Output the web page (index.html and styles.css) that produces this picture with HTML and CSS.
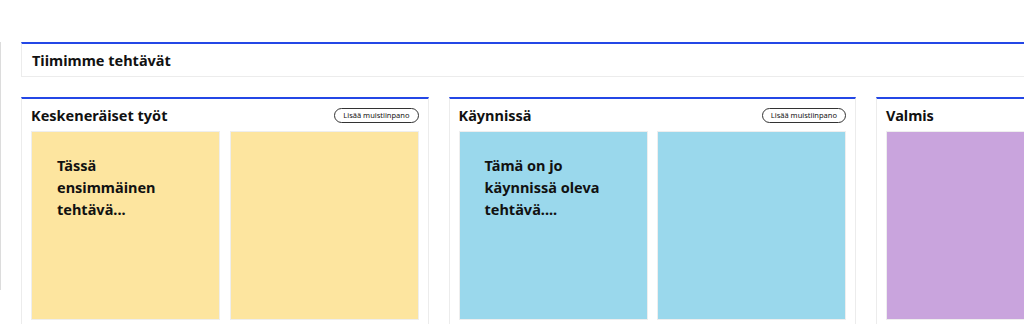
FILE: index.html
```html
<html>
<head>
	<meta charset="utf-8" />
	<link rel="stylesheet" href="styles.css">
</head>

<body>
	<div class="page">
		<div class="side-edge"></div>
		<div class="main">
			<div class="board-header">
				<h1>Tiimimme tehtävät</h1>
			</div>
			<div class="columns">
				<div class="column">
					<div class="column-head">
						<h2>Keskeneräiset työt</h2>
						<span class="add-note">Lisää muistiinpano</span>
					</div>
					<div class="notes">
						<div class="note yellow">Tässä ensimmäinen tehtävä...</div>
						<div class="note yellow"></div>
					</div>
				</div>
				<div class="column">
					<div class="column-head">
						<h2>Käynnissä</h2>
						<span class="add-note">Lisää muistiinpano</span>
					</div>
					<div class="notes">
						<div class="note blue">Tämä on jo käynnissä oleva tehtävä....</div>
						<div class="note blue"></div>
					</div>
				</div>
				<div class="column">
					<div class="column-head">
						<h2>Valmis</h2>
					</div>
					<div class="notes">
						<div class="note purple"></div>
					</div>
				</div>
			</div>
		</div>
	</div>
</body>
</html>
```

FILE: styles.css
```css
* {
	box-sizing: border-box;
}
body {
	margin: 0;
	padding: 0;
	background: #fff;
	font-family: "Noto Sans", "Open Sans", sans-serif;
	color: #111;
	overflow: hidden;
}
.page {
	display: flex;
	width: 1400px;
}
.side-edge {
	width: 1px;
	height: 248px;
	margin-top: 42px;
	background: #dcdcdc;
}
.main {
	margin-left: 20px;
	padding-top: 42px;
}
.board-header {
	width: 1250px;
	height: 35px;
	border-top: 2px solid #2447e6;
	border-left: 1px solid #ececec;
	border-bottom: 1px solid #ececec;
	display: flex;
	align-items: center;
	padding-left: 10px;
}
h1 {
	margin: 0;
	font-size: 14.5px;
	font-weight: 700;
}
.columns {
	display: flex;
	gap: 20px;
	margin-top: 20px;
}
.column {
	width: 407.5px;
	height: 240px;
	border-top: 2px solid #2447e6;
	border-left: 1px solid #ececec;
	border-right: 1px solid #ececec;
	padding: 0 9px;
}
.column-head {
	height: 32px;
	display: flex;
	align-items: center;
	justify-content: space-between;
}
h2 {
	margin: 0;
	font-size: 14.5px;
	font-weight: 700;
}
.add-note {
	font-size: 7.5px;
	border: 1px solid #333;
	border-radius: 8px;
	padding: 1px 8px;
	line-height: 11px;
}
.notes {
	display: flex;
	gap: 9.5px;
}
.note {
	width: 189px;
	height: 189px;
	padding: 22px 25px;
	font-size: 14.5px;
	font-weight: 700;
	line-height: 22px;
	border: 1px solid #eee;
}
.yellow {
	background: #fde59f;
}
.blue {
	background: #9ad8ec;
}
.purple {
	background: #c9a4dd;
	width: 300px;
}
```
